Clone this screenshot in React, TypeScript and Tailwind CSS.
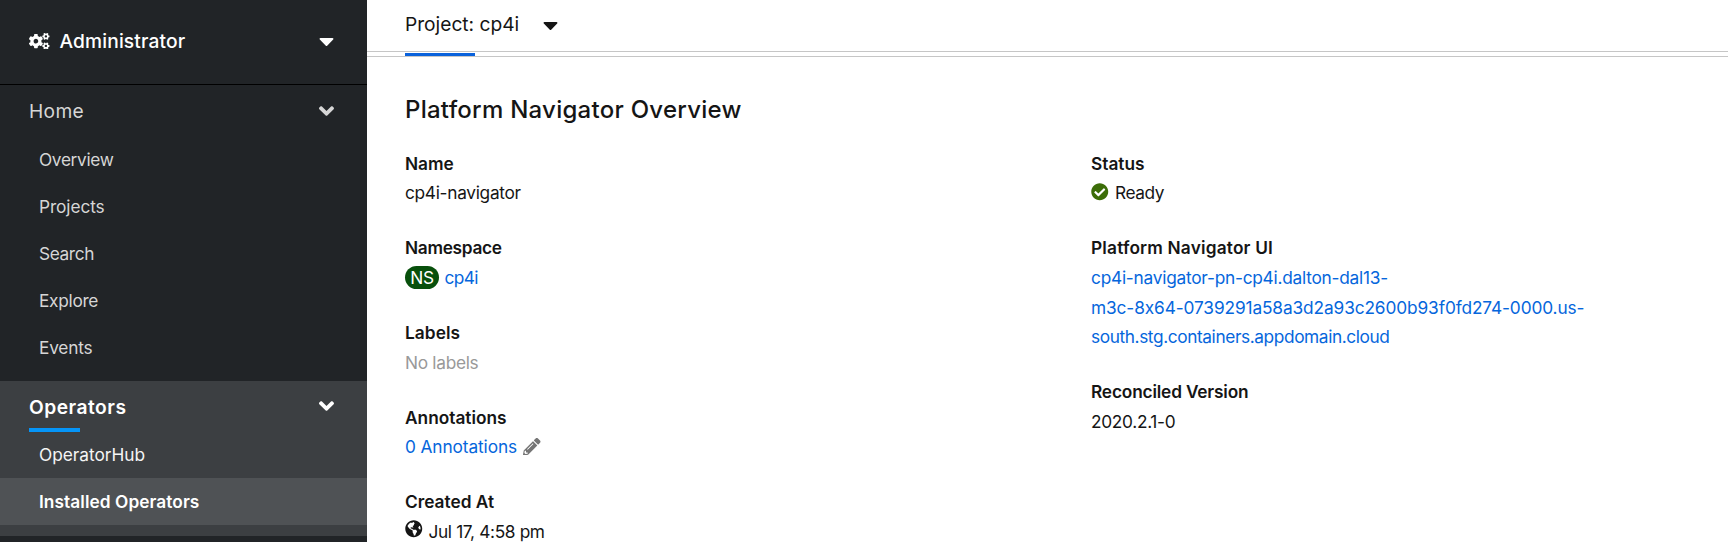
import type { ReactNode } from "react";
import {
  FaAngleDown,
  FaCaretDown,
  FaCheckCircle,
  FaCogs,
  FaGlobeAmericas,
  FaPencilAlt,
} from "react-icons/fa";

function NavItem({ label, tracking, active = false, bright = false }: {
  label: string;
  tracking: string;
  active?: boolean;
  bright?: boolean;
}) {
  const tone = active
    ? "bg-[#4f5255] font-semibold text-white"
    : bright
      ? "text-[#f5f5f5]"
      : "text-[#d6d6d6]";
  return (
    <li>
      <a className={`flex h-[47px] items-center pl-[39px] ${tone} ${tracking}`}>{label}</a>
    </li>
  );
}

function Field({ label, tracking, children }: {
  label: string;
  tracking: string;
  children: ReactNode;
}) {
  return (
    <div>
      <dt className={`font-semibold ${tracking}`}>{label}</dt>
      <dd>{children}</dd>
    </div>
  );
}

function Sidebar() {
  return (
    <nav className="flex w-[366.5px] shrink-0 flex-col bg-[#212427]">
      <div className="flex h-[85px] shrink-0 items-center border-b border-black pr-[33px] pb-[2px] pl-[29px] text-white">
        <FaCogs className="h-[16.4px] w-[20.5px]" />
        <span className="ml-[10px] text-[19.2px] font-medium tracking-[0.13px]">Administrator</span>
        <FaCaretDown className="ml-auto h-[24px] w-[15px]" />
      </div>

      <section className="pb-[10px]">
        <h2 className="flex h-[51px] items-center justify-between pr-[33px] pl-[29px] text-[19.2px] tracking-[0.35px] text-[#d6d6d6]">
          <span className="pt-[2px]">Home</span>
          <FaAngleDown className="h-[24px] w-[15px]" />
        </h2>
        <ul>
          <NavItem label="Overview" tracking="tracking-[-0.35px]" />
          <NavItem label="Projects" tracking="tracking-[-0.1px]" />
          <NavItem label="Search" tracking="tracking-[-0.4px]" />
          <NavItem label="Explore" tracking="tracking-[-0.3px]" />
          <NavItem label="Events" tracking="tracking-[-0.2px]" />
        </ul>
      </section>

      <section className="bg-[#3c3f42] pb-[10.5px]">
        <h2 className="relative flex h-[50px] items-center justify-between pr-[33px] pl-[29px] text-[19.2px] font-semibold tracking-[0.5px] text-white">
          <span className="pt-[2px]">Operators</span>
          <FaAngleDown className="h-[24px] w-[15px]" />
          <span className="absolute -bottom-px left-[29px] h-[4px] w-[51px] bg-[#0595f8]" />
        </h2>
        <ul>
          <NavItem label="OperatorHub" tracking="tracking-[-0.03px]" bright />
          <NavItem label="Installed Operators" tracking="tracking-[0.07px]" active />
        </ul>
      </section>
    </nav>
  );
}

export default function App() {
  return (
    <div className="flex h-[542px] w-full overflow-hidden bg-white font-['Inter',sans-serif] text-[17.3px] text-[#151515]">
      <Sidebar />
      <main className="min-w-0 flex-1">
        <div className="flex h-[52px] items-center border-b border-[#c6c6c6] pb-[2px] pl-[38.5px] text-[19.2px]">
          <span className="tracking-[-0.02px]">Project: cp4i</span>
          <FaCaretDown className="ml-[23.5px] h-[24px] w-[15px]" />
        </div>
        <div className="flex h-[5px] items-end border-b border-[#c6c6c6] pl-[38.5px]">
          <div className="h-[3px] w-[70px] bg-[#0a62dc]" />
        </div>

        <div className="pt-[35px] pl-[38.5px]">
          <h1 className="text-[24px] leading-[36px] font-medium tracking-[0.26px]">
            Platform Navigator Overview
          </h1>
          <div className="mt-[20.7px] grid grid-cols-[686px_510px] leading-[29.6px]">
            <dl className="flex flex-col gap-[25.5px]">
              <Field label="Name" tracking="tracking-[-0.03px]">
                <span className="tracking-[-0.3px]">cp4i-navigator</span>
              </Field>
              <Field label="Namespace" tracking="tracking-[-0.3px]">
                <span className="flex items-center">
                  <span className="flex h-[23px] w-[34px] items-center justify-center rounded-full bg-[#08500c] tracking-[-0.3px] text-white">
                    NS
                  </span>
                  <a className="ml-[5.5px] tracking-[-0.6px] text-[#0566dc]">cp4i</a>
                </span>
              </Field>
              <Field label="Labels" tracking="tracking-[0.05px]">
                <span className="tracking-[-0.3px] text-[#999999]">No labels</span>
              </Field>
              <Field label="Annotations" tracking="tracking-normal">
                <span className="flex items-center">
                  <a className="tracking-[-0.11px] text-[#0566dc]">0 Annotations</a>
                  <FaPencilAlt className="mb-px ml-[6px] size-[17.5px] text-[#757575]" />
                </span>
              </Field>
              <Field label="Created At" tracking="tracking-normal">
                <span className="flex items-center">
                  <FaGlobeAmericas className="mb-[6px] size-[17.5px]" />
                  <span className="ml-[6px] tracking-[-0.36px]">Jul 17, 4:58 pm</span>
                </span>
              </Field>
            </dl>

            <dl className="flex flex-col gap-[25.5px]">
              <Field label="Status" tracking="tracking-normal">
                <span className="flex items-center">
                  <FaCheckCircle className="mb-[2px] size-[17.5px] text-[#3c6d08]" />
                  <span className="ml-[6.5px] tracking-[-0.45px]">Ready</span>
                </span>
              </Field>
              <Field label="Platform Navigator UI" tracking="tracking-[0.18px]">
                <a className="block whitespace-nowrap text-[#0566dc]">
                  <span className="block tracking-[-0.24px]">cp4i-navigator-pn-cp4i.dalton-dal13-</span>
                  <span className="block tracking-[-0.12px]">m3c-8x64-0739291a58a3d2a93c2600b93f0fd274-0000.us-</span>
                  <span className="block tracking-[-0.4px]">south.stg.containers.appdomain.cloud</span>
                </a>
              </Field>
              <Field label="Reconciled Version" tracking="tracking-[-0.18px]">
                <span className="tracking-[-0.3px]">2020.2.1-0</span>
              </Field>
            </dl>
          </div>
        </div>
      </main>
    </div>
  );
}
